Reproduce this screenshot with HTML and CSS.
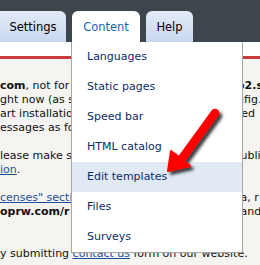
FILE: index.html
```html
<!DOCTYPE html>
<html lang="en">

<head>
    <meta charset="UTF-8">
    <meta name="viewport" content="width=device-width, initial-scale=1.0">
    <title>admin menu</title>

    <link rel="stylesheet" href="styles.css">
</head>

<body>
    <div class="topbar">
        <div class="tab tab_settings">Settings</div>
        <div class="tab tab_active">Content</div>
        <div class="tab tab_help">Help</div>
    </div>
    <div class="strip"></div>

    <div class="content">
        <div class="ln"><span class="l"><b>com</b>, not for</span><span class="r"><b>o2.s</b></span></div>
        <div class="ln"><span class="l">ght now (as s</span><span class="r">nfig.</span></div>
        <div class="ln"><span class="l">art installation</span><span class="r">red</span></div>
        <div class="ln"><span class="l">essages as fo</span><span class="r"></span></div>
        <div class="ln blank"></div>
        <div class="ln"><span class="l">lease make s</span><span class="r">&nbsp;ublic</span></div>
        <div class="ln"><span class="l"><a href="#">ion</a>.</span><span class="r"></span></div>
        <div class="ln blank"></div>
        <div class="ln"><span class="l"><a href="#">censes" section</a></span><span class="r">&nbsp;a, r</span></div>
        <div class="ln"><span class="l"><b>oprw.com/r</b></span><span class="r">&nbsp;and</span></div>
        <div class="ln blank"></div>
        <div class="ln blank"></div>
        <div class="ln full">y submitting <a href="#">contact us</a> form on our website.</div>
    </div>

    <!-- dropdown of the Content tab -->
    <ul class="menu">
        <li>Languages</li>
        <li>Static pages</li>
        <li>Speed bar</li>
        <li>HTML catalog</li>
        <li class="hover">Edit templates</li>
        <li>Files</li>
        <li>Surveys</li>
    </ul>

    <svg class="arrow" width="260" height="265" viewBox="0 0 260 265">
        <defs>
            <filter id="shadow" x="-50%" y="-50%" width="200%" height="200%">
                <feDropShadow dx="3" dy="3" stdDeviation="1.6" flood-color="#000" flood-opacity="0.75"></feDropShadow>
            </filter>
        </defs>
        <g filter="url(#shadow)">
            <line x1="215" y1="113" x2="183" y2="157" stroke="#f00" stroke-width="8.5" stroke-linecap="round"></line>
            <polygon points="171,151 190,166 168,171" fill="#f00" stroke="#f00" stroke-width="2" stroke-linejoin="round"></polygon>
        </g>
    </svg>
</body>

</html>
```

FILE: styles.css
```css
* {
    margin: 0;
    padding: 0;
    box-sizing: border-box;
}

body {
    width: 260px;
    height: 265px;
    overflow: hidden;
    position: relative;
    font-family: "DejaVu Sans", Verdana, sans-serif;
    font-size: 11px;
    color: #111;
    background: #f5f4f1;
}

.topbar {
    height: 42px;
    background-color: #3d454d;
    display: flex;
    align-items: flex-end;
    gap: 6px;
}

.tab {
    height: 31px;
    border-radius: 6px 6px 0 0;
    display: flex;
    align-items: center;
    justify-content: center;
    font-size: 11.5px;
    color: #000;
    background: linear-gradient(#e3ebf7, #c9d7ee);
}

.tab_settings {
    width: 72px;
    margin-left: -6px;
    padding-left: 6px;
}

.tab_active {
    width: 68px;
    background: #fff;
    color: #1763b8;
}

.tab_help {
    width: 47px;
}

.strip {
    height: 17px;
    background: #fff;
    border-bottom: 3px solid #c73c3c;
}

.content {
    padding-top: 20px;
    line-height: 14px;
}

.ln {
    height: 14px;
    display: grid;
    grid-template-columns: 71px 166px 1fr;
    white-space: nowrap;
}

.ln .l {
    grid-column: 1;
    overflow: hidden;
}

.ln .r {
    grid-column: 3;
    overflow: hidden;
}

.ln.full {
    display: block;
}

.content a {
    color: #1a4f9c;
}

.menu {
    position: absolute;
    top: 42px;
    left: 71px;
    width: 172px;
    list-style: none;
    background: #fff;
    border: 1px solid #a6a6a6;
    border-top: none;
    z-index: 2;
}

.menu li {
    height: 30px;
    line-height: 30px;
    padding-left: 15px;
    font-size: 11px;
    color: #0c2c6a;
}

.menu li.hover {
    background: #e1e9f4;
}

.arrow {
    position: absolute;
    top: 0;
    left: 0;
    z-index: 3;
    pointer-events: none;
}
```
